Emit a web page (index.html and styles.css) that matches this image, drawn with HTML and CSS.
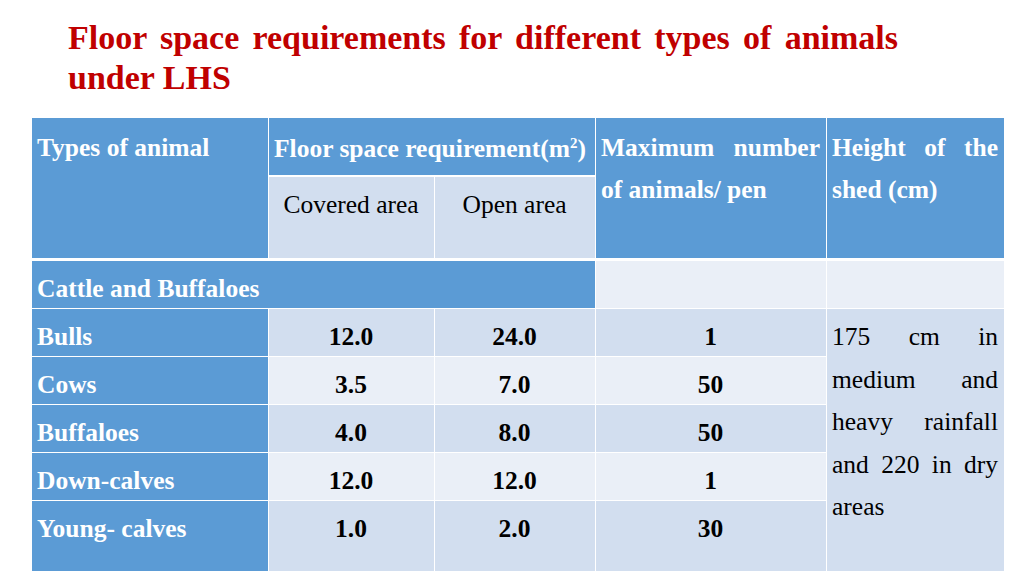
FILE: index.html
```html
<!DOCTYPE html>
<html>
<head>
<meta charset="utf-8">
<link rel="stylesheet" href="styles.css">
</head>
<body>
<div class="slide">
  <h1 class="title">Floor space requirements for different types of animals under LHS</h1>
  <table class="grid">
    <colgroup>
      <col class="c1"><col class="c2"><col class="c3"><col class="c4"><col class="c5">
    </colgroup>
    <tr class="h1row">
      <th rowspan="2" class="hd">Types of animal</th>
      <th colspan="2" class="hd floor">Floor space requirement(m<sup>2</sup>)</th>
      <th rowspan="2" class="hd just">Maximum number of animals/ pen</th>
      <th rowspan="2" class="hd just">Height of the shed (cm)</th>
    </tr>
    <tr class="h2row">
      <td class="sub">Covered area</td>
      <td class="sub">Open area</td>
    </tr>
    <tr class="row">
      <td colspan="3" class="first">Cattle and Buffaloes</td>
      <td class="light"></td>
      <td class="light"></td>
    </tr>
    <tr class="row">
      <td class="first">Bulls</td>
      <td class="num dark">12.0</td>
      <td class="num dark">24.0</td>
      <td class="num dark">1</td>
      <td rowspan="5" class="note dark">175 cm in medium and heavy rainfall and 220 in dry areas</td>
    </tr>
    <tr class="row">
      <td class="first">Cows</td>
      <td class="num light">3.5</td>
      <td class="num light">7.0</td>
      <td class="num light">50</td>
    </tr>
    <tr class="row">
      <td class="first">Buffaloes</td>
      <td class="num dark">4.0</td>
      <td class="num dark">8.0</td>
      <td class="num dark">50</td>
    </tr>
    <tr class="row">
      <td class="first">Down-calves</td>
      <td class="num light">12.0</td>
      <td class="num light">12.0</td>
      <td class="num light">1</td>
    </tr>
    <tr class="row last">
      <td class="first">Young- calves</td>
      <td class="num dark">1.0</td>
      <td class="num dark">2.0</td>
      <td class="num dark">30</td>
    </tr>
  </table>
</div>
</body>
</html>
```
FILE: styles.css
```css
html, body {
  margin: 0;
  padding: 0;
  background: #ffffff;
}
body {
  width: 1024px;
  height: 575px;
  overflow: hidden;
  font-family: "Liberation Serif", "Times New Roman", serif;
}
.slide {
  padding-top: 18px;
}
.title {
  margin: 0 0 19px 68px;
  width: 830px;
  font-size: 34px;
  line-height: 40px;
  font-weight: bold;
  color: #c00000;
  text-align: justify;
}
.grid {
  margin-left: 31px;
  border-collapse: collapse;
  table-layout: fixed;
  width: 973px;
  font-size: 25.5px;
  line-height: 42px;
}
.c1 { width: 237px; }
.c2 { width: 166px; }
.c3 { width: 161px; }
.c4 { width: 231px; }
.c5 { width: 178px; }
.grid th, .grid td {
  border: 1px solid #ffffff;
  padding: 9px 6px 0 5px;
  vertical-align: top;
  box-sizing: border-box;
}
.hd {
  background: #5b9bd5;
  color: #ffffff;
  font-weight: bold;
  text-align: left;
}
.h1row { height: 58px; }
.h2row { height: 84px; }
.h2row td { border-bottom: 3px solid #ffffff; }
.h1row th[rowspan] { border-bottom: 3px solid #ffffff; }
.grid th.floor {
  padding-top: 11px;
  border-bottom: 2px solid #ffffff;
  line-height: 40px;
}
.floor sup {
  font-size: 15px;
  line-height: 0;
  vertical-align: 9px;
}
.just {
  text-align: justify;
}
.grid td.sub {
  background: #d2deef;
  color: #000000;
  text-align: center;
  padding-top: 7px;
}
.row { height: 48px; }
.row td {
  padding-top: 9px;
  line-height: 38px;
}
.row.last { height: 71px; }
.first {
  background: #5b9bd5;
  color: #ffffff;
  font-weight: bold;
  text-align: left;
}
.dark { background: #d2deef; }
.light { background: #eaeff7; }
.num {
  color: #000000;
  font-weight: bold;
  text-align: center;
}
.row td.note {
  color: #000000;
  text-align: justify;
  line-height: 42.5px;
  padding-top: 7px;
}
```
